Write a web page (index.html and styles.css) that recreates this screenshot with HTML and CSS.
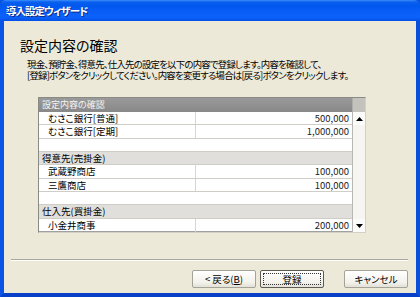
FILE: index.html
```html
<!DOCTYPE html>
<html lang="ja">
<head>
<meta charset="utf-8">
<link rel="stylesheet" href="styles.css">
</head>
<body>
<div class="window">
  <div class="titlebar"><span class="title">導入設定ウィザード</span></div>
  <div class="frame">
    <h1 class="heading">設定内容の確認</h1>
    <div class="desc">
      <div class="line">現金、預貯金、得意先、仕入先の設定を以下の内容で登録します。内容を確認して、</div>
      <div class="line">[登録]ボタンをクリックしてください。内容を変更する場合は[戻る]ボタンをクリックします。</div>
    </div>
    <div class="list">
      <div class="list-head">
        <div class="head-title">設定内容の確認</div>
        <div class="head-corner"></div>
      </div>
      <div class="list-body">
        <div class="rows">
          <div class="row"><span class="name">むさこ銀行[普通]</span><span class="val">500,000</span></div>
          <div class="row"><span class="name">むさこ銀行[定期]</span><span class="val">1,000,000</span></div>
          <div class="row blank"></div>
          <div class="row group"><span class="gname">得意先(売掛金)</span></div>
          <div class="row"><span class="name">武蔵野商店</span><span class="val">100,000</span></div>
          <div class="row"><span class="name">三鷹商店</span><span class="val">100,000</span></div>
          <div class="row blank"></div>
          <div class="row group"><span class="gname">仕入先(買掛金)</span></div>
          <div class="row last"><span class="name">小金井商事</span><span class="val">200,000</span></div>
        </div>
        <div class="vscroll">
          <div class="sbtn"><svg width="7" height="4" viewBox="0 0 7 4"><path d="M3.5 0 L7 4 L0 4 Z" fill="#000"/></svg></div>
          <div class="track"></div>
          <div class="sbtn"><svg width="7" height="4" viewBox="0 0 7 4"><path d="M0 0 L7 0 L3.5 4 Z" fill="#000"/></svg></div>
        </div>
      </div>
    </div>
    <div class="sep"></div>
    <div class="buttons">
      <button class="btn">&lt; 戻る(<u>B</u>)</button>
      <button class="btn default"><span class="focus">登録</span></button>
      <button class="btn cancel">キャンセル</button>
    </div>
  </div>
</div>
</body>
</html>
```
FILE: styles.css
```css
* { box-sizing: border-box; }
html, body { margin: 0; padding: 0; }
body {
  width: 420px;
  height: 297px;
  overflow: hidden;
  font-family: "Noto Sans CJK JP", "Noto Sans", sans-serif;
  font-feature-settings: "palt";
  background: #0a53e0;
}
.window {
  width: 420px;
  height: 297px;
  display: flex;
  flex-direction: column;
}
.titlebar {
  height: 21px;
  flex: none;
  border-radius: 6px 6px 0 0;
  background: linear-gradient(to bottom, #3d8ffa 0px, #0a5fed 2px, #0058ee 6px, #0a5ef8 12px, #0b62fb 17px, #0550e6 21px);
  display: flex;
  align-items: center;
  padding-left: 6px;
}
.title {
  color: #fff;
  font-weight: bold;
  font-size: 10.5px;
  letter-spacing: -1px;
  line-height: 14px;
  text-shadow: 1px 1px 0 #0a2a8a;
}
.frame {
  flex: 1;
  background: #ece9d8;
  border-left: 4px solid #0a55e6;
  border-right: 4px solid #0a4fd8;
  border-bottom: 4px solid #0840c8;
  display: flex;
  flex-direction: column;
}
.heading {
  margin: 15px 0 0 16px;
  font-size: 14px;
  line-height: 18px;
  height: 18px;
  font-weight: normal;
  color: #000;
}
.desc {
  margin: 5px 0 0 23px;
  font-size: 9.4px;
  letter-spacing: -0.75px;
  color: #000;
  white-space: nowrap;
}
.line {
  height: 11px;
  line-height: 11px;
}
.list {
  margin: 16px 0 0 34px;
  width: 328px;
  height: 136px;
  border: 1px solid #8a8a85;
  border-right-color: #d4d0c8;
  border-bottom-color: #d4d0c8;
  box-shadow: inset -1px -1px 0 #a0a0a0;
  background: #fff;
  display: flex;
  flex-direction: column;
}
.list-head {
  height: 14px;
  flex: none;
  display: flex;
}
.head-title {
  flex: 1;
  background: linear-gradient(to bottom, #9a9a9a, #888888);
  color: #f4f4f4;
  font-size: 9px;
  line-height: 14px;
  padding-left: 3px;
}
.head-corner {
  width: 13px;
  background: #c4c2bd;
  border-left: 1px solid #b0aea8;
}
.list-body {
  flex: 1;
  display: flex;
  min-height: 0;
}
.rows {
  flex: 1;
  display: flex;
  flex-direction: column;
}
.row {
  height: 13.5px;
  display: grid;
  grid-template-columns: 157px 1fr;
  border-bottom: 1px solid #cfcdc6;
  font-size: 9.5px;
  line-height: 12px;
  color: #000;
}
.row.last { border-bottom: none; }
.name {
  padding-left: 9px;
  border-right: 1px solid #d8d6cf;
}
.val {
  text-align: right;
  padding-right: 3px;
  color: #222;
}
.row.group {
  background: #e0dfdc;
  grid-template-columns: 1fr;
}
.gname { padding-left: 3px; }
.vscroll {
  width: 13px;
  flex: none;
  background: #f6f5f1;
  border-left: 1px solid #b8b6b0;
  display: flex;
  flex-direction: column;
}
.sbtn {
  height: 13px;
  display: flex;
  align-items: center;
  justify-content: center;
  background: #fbfbfa;
}
.track { flex: 1; }
.sep {
  margin: 26px 8px 0 7px;
  height: 2px;
  border-top: 1px solid #aca899;
  border-bottom: 1px solid #fff;
}
.buttons {
  margin-top: 9px;
  padding-right: 8px;
  display: flex;
  justify-content: flex-end;
  gap: 4px;
}
.btn {
  width: 64px;
  height: 18px;
  padding: 0;
  font-family: inherit;
  font-feature-settings: "palt";
  font-size: 9.5px;
  line-height: 12px;
  color: #000;
  background: linear-gradient(to bottom, #ffffff, #f3f2ec 70%, #e3e1d8);
  border: 1px solid #a5a397;
  border-radius: 2px;
  display: flex;
  align-items: center;
  justify-content: center;
}
.btn u { text-decoration: underline; }
.btn.default {
  border-color: #5e5c52;
  padding: 2px;
}
.focus {
  flex: 1;
  align-self: stretch;
  border: 1px dotted #333;
  display: flex;
  align-items: center;
  justify-content: center;
}
.btn.cancel { margin-left: 16px; }
```
